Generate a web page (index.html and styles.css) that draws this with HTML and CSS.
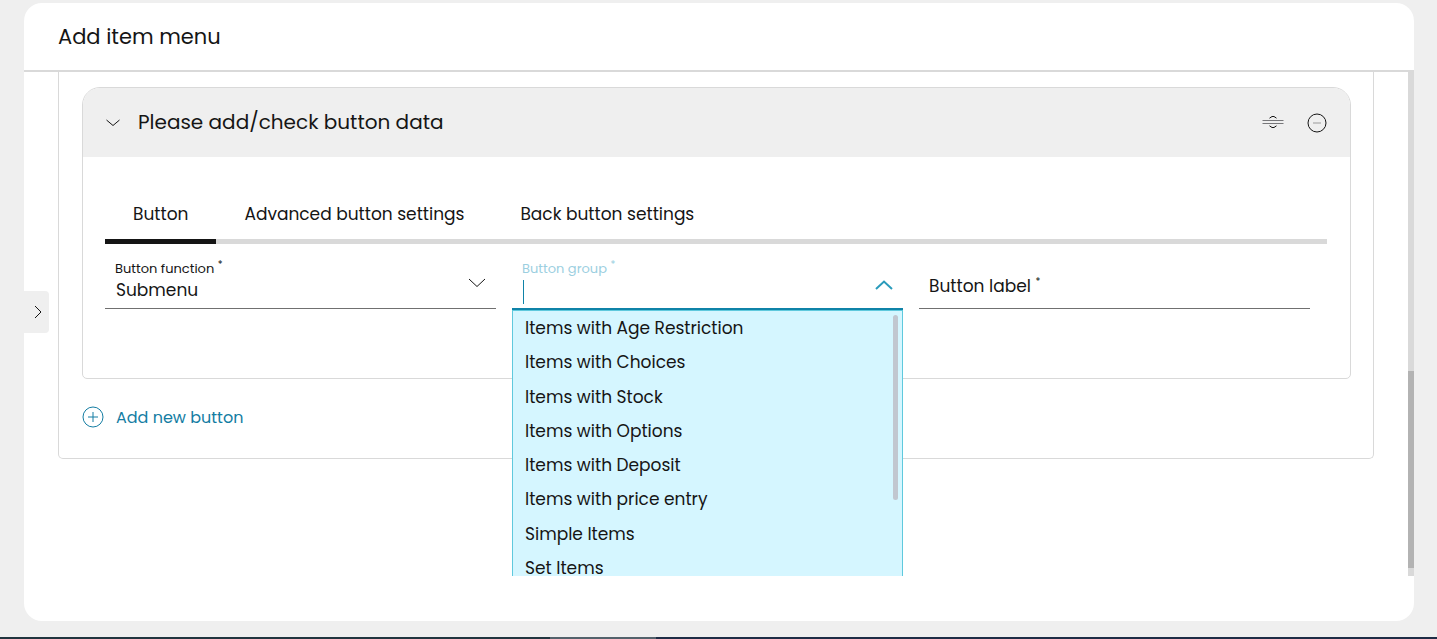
FILE: index.html
```html
<!DOCTYPE html>
<html lang="en">
<head>
  <meta charset="UTF-8">
  <meta name="viewport" content="width=device-width, initial-scale=1.0">
  <link rel="stylesheet" href="styles.css">
  <title>Add item menu</title>
</head>
<body>
  <main class="card">
    <header class="card-header">
      <h1>Add item menu</h1>
    </header>

    <button class="side-toggle" aria-label="Open side panel">
      <svg width="8" height="14" viewBox="0 0 8 14"><path d="M1 1l6 6-6 6"/></svg>
    </button>

    <div class="card-scroll">
      <div class="group">
        <section class="panel">
          <div class="panel-header">
            <button class="icon-button" aria-label="Collapse">
              <svg width="14" height="8" viewBox="0 0 14 8"><path d="M0.5 1L7 6.5 13.5 1"/></svg>
            </button>
            <h2>Please add/check button data</h2>
            <button class="icon-button" aria-label="Move">
              <svg width="22" height="18" viewBox="0 0 22 18">
                <path d="M7.500 4.200L10 2.500h2L14.500 4.200M7.500 11.800L10 13.500h2L14.500 11.800"/>
                <path class="lines" d="M.5 6.500h21M.5 9.500h21"/>
              </svg>
            </button>
            <button class="icon-button" aria-label="Remove">
              <svg width="20" height="20" viewBox="0 0 20 20">
                <circle cx="10" cy="10" r="9"/>
                <path class="muted" d="M6 10h8"/>
              </svg>
            </button>
          </div>

          <div class="panel-body">
            <div class="tabs" role="tablist">
              <button class="tab active" role="tab" aria-selected="true">Button</button>
              <button class="tab" role="tab" aria-selected="false">Advanced button settings</button>
              <button class="tab" role="tab" aria-selected="false">Back button settings</button>
            </div>

            <form class="fields">
              <div class="field">
                <label for="buttonFunction">Button function <sup>*</sup></label>
                <select id="buttonFunction">
                  <option>Submenu</option>
                </select>
                <svg class="arrow" width="18" height="10" viewBox="0 0 18 10"><path d="M1 1l8 7.500L17 1"/></svg>
              </div>

              <div class="field open">
                <label for="buttonGroup">Button group <sup>*</sup></label>
                <input type="text" id="buttonGroup" role="combobox" aria-expanded="true" aria-controls="groupList">
                <svg class="arrow" width="18" height="10" viewBox="0 0 18 10"><path d="M1 9l8-7.500L17 9"/></svg>
                <ul class="options" id="groupList" role="listbox">
                  <li role="option">Items with Age Restriction</li>
                  <li role="option">Items with Choices</li>
                  <li role="option">Items with Stock</li>
                  <li role="option">Items with Options</li>
                  <li role="option">Items with Deposit</li>
                  <li role="option">Items with price entry</li>
                  <li role="option">Simple Items</li>
                  <li role="option">Set Items</li>
                </ul>
              </div>

              <div class="field empty">
                <label for="buttonLabel">Button label <sup>*</sup></label>
                <input type="text" id="buttonLabel">
              </div>
            </form>
          </div>
        </section>

        <button class="add-button">
          <svg width="22" height="22" viewBox="0 0 22 22">
            <circle cx="11" cy="11" r="10"/>
            <path d="M6 11h10M11 6v10"/>
          </svg>
          Add new button
        </button>
      </div>
      <div class="scrollbar"></div>
    </div>
  </main>
  <footer class="taskbar"></footer>
</body>
</html>
```
FILE: styles.css
```css
* {
  box-sizing: border-box;
}

body {
  font-family: 'Poppins', 'Inter', sans-serif;
  font-size: 17px;
  color: #151515;
  background-color: #efefef;
  margin: 0;
  display: flex;
  flex-direction: column;
  height: 100vh;
}

button, input, select {
  font: inherit;
  color: inherit;
  background: none;
  border: none;
  border-radius: 0;
  padding: 0;
  outline: none;
}

button {
  cursor: pointer;
}

h1, h2 {
  font-size: 21px;
  font-weight: 400;
  line-height: 32px;
  margin: 0;
}

svg {
  display: block;
  fill: none;
  stroke: currentColor;
}

.card {
  position: relative;
  flex: 1;
  min-height: 0;
  display: flex;
  flex-direction: column;
  margin: 3px 23px 16px 24px;
  padding-bottom: 45px;
  background-color: #fff;
  border-radius: 18px;
}

.card-header {
  padding: 18px 34px 17px;
  border-bottom: 2px solid #d9d9d9;
}

.side-toggle {
  position: absolute;
  left: 0;
  top: 288px;
  width: 25px;
  height: 42px;
  padding-left: 10px;
  background-color: #efefef;
  border-radius: 0 4px 4px 0;
}

.card-scroll {
  position: relative;
  flex: 1;
  min-height: 0;
  overflow: hidden;
  padding: 0 40px 0 34px;
}

.scrollbar {
  position: absolute;
  top: 0;
  right: 0;
  bottom: 0;
  width: 6px;
  background-color: #d9d9d9;
}

.scrollbar::after {
  content: "";
  position: absolute;
  bottom: 8px;
  width: 6px;
  height: 39%;
  background-color: #b3b3b3;
}

.group {
  border: 1px solid #d9d9d9;
  border-top: none;
  border-radius: 0 0 5px 5px;
  padding: 15px 22px 29px 23px;
}

.panel {
  border: 1px solid #d9d9d9;
  border-radius: 18px 18px 5px 5px;
}

.panel-header {
  display: flex;
  align-items: center;
  gap: 23px;
  height: 69px;
  padding: 0 23px;
  background-color: #efefef;
  border-radius: 17px 17px 0 0;
}

.panel-header h2 {
  flex: 1;
  margin-left: -5px;
  padding-bottom: 2px;
  font-size: 20px;
}

.lines {
  stroke: #77777a;
}

.muted {
  stroke: #999;
}

.panel-body {
  padding: 28px 23px 68px 22px;
}

.tabs {
  display: flex;
  border-bottom: 5px solid #d9d9d9;
}

.tab {
  height: 59px;
  padding: 4px 28px 0;
  margin-bottom: -5px;
  border-bottom: 5px solid transparent;
}

.tab.active {
  border-bottom-color: #151515;
}

.fields {
  display: grid;
  grid-template-columns: repeat(3, 1fr);
  gap: 16px;
  padding-right: 17px;
}

.field {
  position: relative;
  height: 65px;
  padding: 16px 10px 0;
  border-bottom: 1px solid #707070;
}

.field label {
  display: block;
  font-size: 13px;
  line-height: 18px;
}

sup {
  font-size: 10px;
  line-height: 1;
}

.field select,
.field input {
  display: block;
  width: 100%;
  height: 22px;
  padding-left: 1px;
  appearance: none;
}

.field .arrow {
  position: absolute;
  right: 10px;
  top: 34px;
}

.field.open {
  height: 66px;
  border-bottom: 2px solid #0f83a8;
}

.field.open label {
  color: #9ccfdf;
}

.field.open .arrow {
  top: 36px;
  color: #2a9bbb;
  stroke-width: 2;
}

/* text cursor */
.field.open::before {
  content: "";
  position: absolute;
  left: 11px;
  top: 36px;
  width: 1px;
  height: 24px;
  background-color: #0f83a8;
}

.field.empty label {
  font-size: 17px;
  line-height: 24px;
  padding-top: 14px;
}

.field.empty input {
  position: absolute;
  left: 0;
  top: 0;
  height: 100%;
}

.options {
  position: absolute;
  left: 0;
  right: 0;
  top: 66px;
  height: 276px;
  margin: 0;
  padding: 0 12px;
  display: flex;
  flex-direction: column;
  list-style: none;
  background-color: #d5f6ff;
  border: 1px solid #5fc9dd;
}

.options li {
  flex: 1;
  display: flex;
  align-items: center;
}

.options::after {
  content: "";
  position: absolute;
  right: 4px;
  top: 4px;
  width: 5px;
  height: 185px;
  border-radius: 3px;
  background-color: #c1c7d0;
}

.add-button {
  display: flex;
  align-items: center;
  gap: 12px;
  height: 24px;
  margin-top: 26px;
  font-size: 16px;
  color: #147da3;
}

.taskbar {
  height: 2px;
  background: linear-gradient(to right, #21343f 550px, #53616b 550px, #53616b 656px, #1e2c45 656px);
}
```
